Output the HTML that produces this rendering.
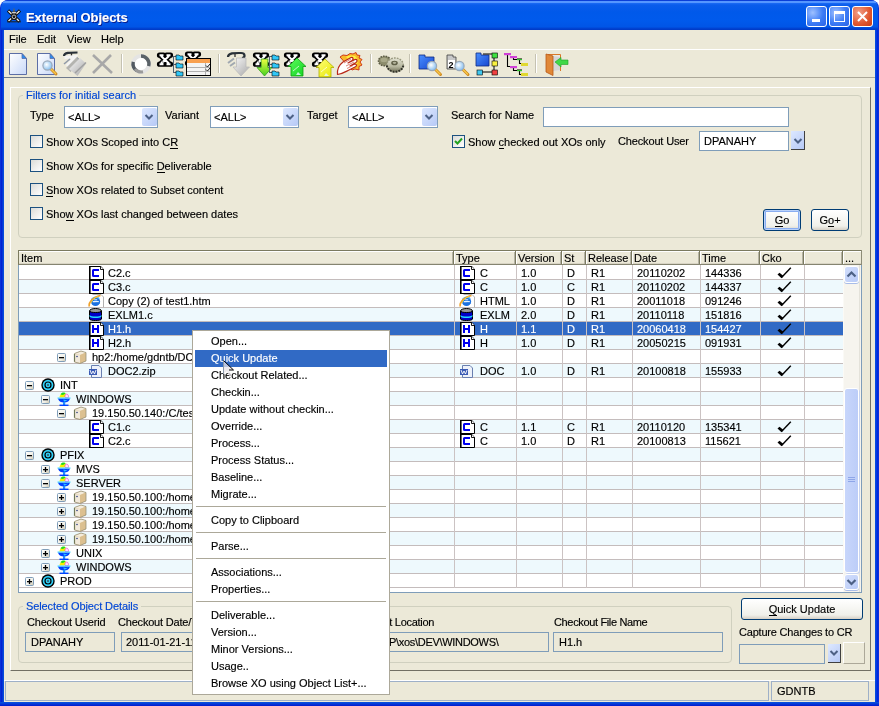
<!DOCTYPE html>
<html><head><meta charset="utf-8"><style>
*{box-sizing:border-box;margin:0;padding:0}
html,body{width:879px;height:706px;overflow:hidden;background:#fff}
body{position:relative;font-family:"Liberation Sans",sans-serif;font-size:11px;color:#000}
.a{position:absolute}
.t{position:absolute;white-space:pre;line-height:13px;-webkit-text-stroke:0.15px currentColor}
#w{position:absolute;left:0;top:0;width:879px;height:706px;will-change:transform}
.ic{position:absolute;overflow:visible}
u{text-decoration:none;border-bottom:1px solid #000;line-height:11px;display:inline-block}
</style></head><body><div id="w">

<svg width="0" height="0" style="position:absolute">
<defs>
<linearGradient id="g-title" x1="0" y1="0" x2="0" y2="1">
 <stop offset="0" stop-color="#0058ee"/><stop offset="0.1" stop-color="#3d95ff"/><stop offset="0.25" stop-color="#0a66ff"/>
 <stop offset="0.5" stop-color="#0055e5"/><stop offset="0.9" stop-color="#0050e0"/><stop offset="1" stop-color="#003dd0"/>
</linearGradient>
<symbol id="i-c" viewBox="0 0 16 14">
 <path d="M1.5 0.5H12.8L15.5 3.2V13.5H1.5Z" fill="#fff" stroke="#000"/>
 <rect x="1" y="0" width="1.6" height="14" fill="#000"/>
 <path d="M12.5 0.5V3.5H15.5" fill="none" stroke="#000" stroke-width="0.9"/>
 <path d="M13 1L15 3H13Z" fill="#fff"/>
 <path d="M11 3H5.5Q4 3 4 4.5V9.5Q4 11 5.5 11H11V9H6V5H11Z" fill="#0000f0"/>
</symbol>
<symbol id="i-h" viewBox="0 0 16 14">
 <path d="M1.5 0.5H12.8L15.5 3.2V13.5H1.5Z" fill="#fff" stroke="#000"/>
 <rect x="1" y="0" width="1.6" height="14" fill="#000"/>
 <path d="M12.5 0.5V3.5H15.5" fill="none" stroke="#000" stroke-width="0.9"/>
 <path d="M13 1L15 3H13Z" fill="#fff"/>
 <path d="M4 3H6V6H9V3H11V11H9V8H6V11H4Z" fill="#0000f0"/>
</symbol>
<symbol id="i-ie" viewBox="0 0 16 14">
 <path d="M4.5 0.5H13L15.5 3V13.5" fill="#fff" stroke="#b0b0b0"/>
 <circle cx="7.5" cy="7.5" r="4.6" fill="#1a70e0"/>
 <path d="M4 5.5A4.5 4.5 0 0 1 11 4.5" stroke="#50b8ff" stroke-width="1.5" fill="none"/>
 <rect x="4.8" y="7" width="6" height="1.3" fill="#e8f4ff"/>
 <path d="M6.2 5.8H9.2" stroke="#e8f4ff" stroke-width="1"/>
 <rect x="7.5" y="8.5" width="4" height="1.5" fill="#1a70e0"/>
 <path d="M1.5 12.5C0 10 4 3 12.5 1.5" fill="none" stroke="#f0a028" stroke-width="1.6"/>
 <path d="M3 9C4 6 7 3.5 10 2.5" fill="none" stroke="#f8e040" stroke-width="0.8"/>
</symbol>
<symbol id="i-db" viewBox="0 0 16 14">
 <ellipse cx="7.5" cy="3" rx="6" ry="2.5" fill="#9a9a9a" stroke="#000"/>
 <path d="M1.5 3V11C1.5 13 13.5 13 13.5 11V3C13.5 5 1.5 5 1.5 3Z" fill="#0000c8" stroke="#000"/>
 <path d="M1.5 7C3 9 12 9 13.5 7V8.5C12 10.5 3 10.5 1.5 8.5Z" fill="#20d8ff"/>
</symbol>
<symbol id="i-doc" viewBox="0 0 16 14">
 <path d="M3.5 1.5H11L13.5 4V13.5H3.5Z" fill="#eef2fa" stroke="#6a7fb0"/>
 <rect x="1" y="5" width="8" height="6" fill="#3b5bb5"/>
 <path d="M2 6L3.5 10L5 7L6.5 10L8 6" fill="none" stroke="#fff" stroke-width="0.9"/>
</symbol>
<symbol id="i-box" viewBox="0 0 16 14">
 <path d="M2 3.5L9 1L14 2.5V11L8 13.5L2 12Z" fill="#e6d4b0"/>
 <path d="M2.5 4L8 5.5V13L2.5 11.5Z" fill="#f2eadc"/>
 <path d="M2.5 3.5L9 1.2L13.8 2.6L8 5Z" fill="#f4ecdc"/>
 <path d="M8 5L13.8 2.6V11L8 13.2Z" fill="#dcc090"/>
 <path d="M2.5 3.8V11.8" stroke="#707858" stroke-width="1.2"/>
 <path d="M2.5 3.5L9 1L14 2.5V11L8 13.5L2.5 12" fill="none" stroke="#8a8468" stroke-width="0.7"/>
 <circle cx="5" cy="6.5" r="0.8" fill="#304080"/>
</symbol>
<symbol id="i-tgt" viewBox="0 0 14 14">
 <circle cx="7" cy="7" r="6.7" fill="#000"/>
 <circle cx="7" cy="7" r="5.3" fill="#30d0f8"/>
 <circle cx="7" cy="7" r="3.6" fill="#000"/>
 <circle cx="7" cy="7" r="2.4" fill="#30d0f8"/>
 <circle cx="7" cy="7" r="1" fill="#305060"/>
</symbol>
<symbol id="i-cup" viewBox="0 0 14 14">
 <path d="M2.5 5.5C2.5 1 9 0 10 3L7 5.5Z" fill="#f8f000"/>
 <path d="M3.5 2.5C4.5 0 8 0 8.5 1.5L6 3Z" fill="#20d820"/>
 <path d="M8 4C8 1 12 1.5 11.5 5.5H8Z" fill="#ffe0ff" stroke="#e040c0" stroke-width="0.6"/>
 <path d="M0.5 5.5H13.5V6.7H0.5Z" fill="#40d8ff"/>
 <path d="M1 6.7H13C12 9.5 10 10.5 7 10.5C4 10.5 2 9.5 1 6.7Z" fill="#0040ff"/>
 <path d="M6.3 7.5C8 8 9 8.5 11 7.2C10 9 8 9.5 7 9.5Z" fill="#30c0ff"/>
 <rect x="6" y="10" width="2.2" height="3" fill="#2090ff"/>
 <rect x="2.5" y="12.6" width="9" height="1.4" fill="#0040ff"/>
</symbol>
<linearGradient id="g-exp" x1="0" y1="0" x2="1" y2="1"><stop offset="0" stop-color="#fff"/><stop offset="0.6" stop-color="#f0f0e8"/><stop offset="1" stop-color="#c8c0a8"/></linearGradient>
<symbol id="i-plus" viewBox="0 0 9 9">
 <rect x="0.5" y="0.5" width="8" height="8" rx="1" fill="url(#g-exp)" stroke="#7f9db9"/>
 <rect x="2" y="4" width="5" height="1.3" fill="#000"/><rect x="3.85" y="2" width="1.3" height="5" fill="#000"/>
</symbol>
<symbol id="i-minus" viewBox="0 0 9 9">
 <rect x="0.5" y="0.5" width="8" height="8" rx="1" fill="url(#g-exp)" stroke="#7f9db9"/>
 <rect x="2" y="4" width="5" height="1.3" fill="#000"/>
</symbol>
<symbol id="i-check" viewBox="0 0 16 14">
 <path d="M1.5 8.5L5.5 12.3L7.5 10L3.5 6.8Z" fill="#000"/>
 <path d="M5.5 11.5L14.8 1.8" fill="none" stroke="#000" stroke-width="1.4"/>
</symbol>
<symbol id="i-ddarrow" viewBox="0 0 16 20">
 <path d="M4.5 8L8 11.5L11.5 8" fill="none" stroke="#4d6185" stroke-width="2"/>
</symbol>
</defs></svg>

<div class="a" style="left:0;top:0;width:879px;height:706px;background:#0831d9;border-radius:8px 8px 0 0"></div>
<div class="a" style="left:1px;top:0;width:877px;height:30px;border-radius:7px 7px 0 0;background:linear-gradient(#0a3fd8 0px,#0a3fd8 1px,#5596ff 1px,#5596ff 3px,#1c6cf6 3px,#0a5ceb 5px,#0059ea 12px,#005aec 20px,#0055e6 27px,#0046d6 28px,#0038c4 30px)"></div>
<div class="a" style="left:1px;top:30px;width:3px;height:672px;background:linear-gradient(90deg,#0019cf,#0855dd)"></div>
<div class="a" style="left:875px;top:30px;width:3px;height:672px;background:linear-gradient(90deg,#0855dd,#001de0)"></div>
<div class="a" style="left:0;top:702px;width:879px;height:4px;background:linear-gradient(#0855dd,#0019cf)"></div>
<svg class="ic" style="left:4px;top:6px" width="20" height="20" viewBox="4 6 20 20">
 <path d="M14 7.5L15 12H13Z" fill="#806830"/>
 <path d="M8 10.5L19.5 21.5M20 10.5L8 21.5" stroke="#101010" stroke-width="3.2"/>
 <path d="M8.5 11L19 21M19.5 11L8.5 21" stroke="#f4f4f0" stroke-width="1.3"/>
 <rect x="11" y="13" width="6" height="7" rx="2" fill="#151515"/>
 <ellipse cx="14" cy="12.7" rx="2.6" ry="1" fill="#f0f0f0" stroke="#222" stroke-width="0.6"/>
 <circle cx="14" cy="16.8" r="1.8" fill="none" stroke="#c8c8c8" stroke-width="0.9"/>
 <path d="M7 21.8H21" stroke="#202020" stroke-width="1"/>
</svg>
<div class="t" style="left:26px;top:10px;letter-spacing:-0.05px;font-size:13px;font-weight:bold;color:#fff;text-shadow:1px 1px 0 #0a1e8c;line-height:15px">External Objects</div>
<div class="a" style="left:806px;top:6px;width:21px;height:21px;border:1px solid #fff;border-radius:3px;background:radial-gradient(circle at 30% 30%,#9ec0ff,#3c7bf5 55%,#2a62e6)"><div class="a" style="left:5px;top:12px;width:8px;height:3px;background:#fff"></div></div>
<div class="a" style="left:829px;top:6px;width:21px;height:21px;border:1px solid #fff;border-radius:3px;background:radial-gradient(circle at 30% 30%,#9ec0ff,#3c7bf5 55%,#2a62e6)"><div class="a" style="left:4px;top:4px;width:11px;height:11px;border:1px solid #fff;border-top:3px solid #fff"></div></div>
<div class="a" style="left:852px;top:6px;width:21px;height:21px;border:1px solid #fff;border-radius:3px;background:radial-gradient(circle at 30% 30%,#f0a08a,#e0562e 60%,#c83c14)"><svg class="ic" style="left:3px;top:3px" width="13" height="13"><path d="M2 2L11 11M11 2L2 11" stroke="#fff" stroke-width="2"/></svg></div>
<div class="a" style="left:4px;top:30px;width:871px;height:672px;background:#ece9d8"></div>
<div class="t" style="left:9px;top:33px">File</div>
<div class="t" style="left:37px;top:33px">Edit</div>
<div class="t" style="left:67px;top:33px">View</div>
<div class="t" style="left:101px;top:33px">Help</div>
<div class="a" style="left:4px;top:49px;width:871px;height:1px;background:#fff"></div>
<div class="a" style="left:4px;top:77px;width:871px;height:1px;background:#aca899"></div>
<div class="a" style="left:4px;top:77px;width:566px;height:1px;background:#6f7a8c"></div>
<svg class="ic" style="left:0;top:48px" width="580" height="30" viewBox="0 48 580 30">
<defs>
<linearGradient id="g-page" x1="0" y1="0" x2="1" y2="1"><stop offset="0" stop-color="#fff"/><stop offset="1" stop-color="#c8d8f8"/></linearGradient>
<radialGradient id="g-lens" cx="0.4" cy="0.4" r="0.6"><stop offset="0" stop-color="#ffffff"/><stop offset="1" stop-color="#88c0f0"/></radialGradient>
<linearGradient id="g-green" x1="0" y1="0" x2="1" y2="1"><stop offset="0" stop-color="#60ff60"/><stop offset="1" stop-color="#10d020"/></linearGradient>
<linearGradient id="g-yellow" x1="0" y1="0" x2="1" y2="1"><stop offset="0" stop-color="#ffff80"/><stop offset="1" stop-color="#e8e800"/></linearGradient>
<linearGradient id="g-gy" x1="0" y1="0" x2="0" y2="1"><stop offset="0" stop-color="#f0ff40"/><stop offset="1" stop-color="#40d020"/></linearGradient>
<linearGradient id="g-greyarrow" x1="0" y1="0" x2="1" y2="1"><stop offset="0" stop-color="#f8f8f8"/><stop offset="1" stop-color="#a8a8a8"/></linearGradient>
<linearGradient id="g-folder" x1="0" y1="0" x2="1" y2="1"><stop offset="0" stop-color="#4a90ff"/><stop offset="1" stop-color="#1848d0"/></linearGradient>
</defs>
<path d="M9.5 53.5H22L26.5 58.5V74.5H9.5Z" fill="url(#g-page)" stroke="#5c6ea6" stroke-width="1"/><path d="M22 53.5V58.5H26.5Z" fill="#2a8cf0" stroke="#5c6ea6" stroke-width="0.8"/>
<path d="M37.5 53.5H50L54.5 58.5V74.5H37.5Z" fill="url(#g-page)" stroke="#5c6ea6" stroke-width="1"/><path d="M50 53.5V58.5H54.5Z" fill="#2a8cf0" stroke="#5c6ea6" stroke-width="0.8"/>
<line x1="50.5" y1="68.5" x2="56.0" y2="74.0" stroke="#d08a20" stroke-width="3" stroke-linecap="round"/><line x1="51.0" y1="69.0" x2="55.5" y2="73.5" stroke="#f8c848" stroke-width="1.4" stroke-linecap="round"/><circle cx="47.5" cy="65.5" r="4.6" fill="url(#g-lens)" stroke="#9aa8b8" stroke-width="1.2"/>
<path d="M64 56C64 52.5 70 52.5 77.5 52.5" stroke="#283038" stroke-width="2.2" fill="none"/>
<path d="M71.5 53V57" stroke="#303030" stroke-width="1.3"/>
<path d="M64.5 57.5L75 56.5L67 66" stroke="#f4f4f4" stroke-width="3" fill="none"/>
<path d="M64 64L70 59" stroke="#909aa8" stroke-width="1.6"/>
<path d="M66 68L77 57L81.5 60.5L70.5 72Z" fill="#b4b4b0"/>
<path d="M77 57.5L81 61L70.5 71.5" stroke="#7080a0" stroke-width="0.8" stroke-dasharray="1 1" fill="none"/>
<path d="M80 58L86 63.5L77.5 76L69 69Z" fill="url(#g-greyarrow)"/>
<path d="M75 73L86 62.5" stroke="#a0a0a0" stroke-width="1.5"/>
<path d="M93 55L112 73M111 55L93 73" stroke="#a8a8a8" stroke-width="2.6"/>
<circle cx="141" cy="64" r="8" fill="#fff" stroke="#e4e4e4" stroke-width="4"/>
<path d="M141 56A8 8 0 0 1 148.7 66.1" fill="none" stroke="#5a6268" stroke-width="3.4"/>
<path d="M137 70.9A8 8 0 0 1 133.3 61.9" fill="none" stroke="#525a62" stroke-width="3.4"/>
<path d="M135 69A8 8 0 0 0 143 71.8" fill="none" stroke="#9a9a9a" stroke-width="3"/>
<circle cx="141" cy="64" r="5.8" fill="#fff"/>
<path d="M161 56L169 63.5M169 56L161 63.5M159.5 55.2H163.5M166.5 55.2H170.5M159.5 64.2H163.5M166.5 64.2H170.5" stroke="#000" stroke-width="5.2" stroke-linecap="round" stroke-linejoin="round" fill="none"/><path d="M161 56L169 63.5M169 56L161 63.5M159.5 55.2H163.5M166.5 55.2H170.5M159.5 64.2H163.5M166.5 64.2H170.5" stroke="#fff" stroke-width="2" stroke-linecap="butt" fill="none"/><path d="M161.5 61L164 63" stroke="#a0a0a0" stroke-width="1.2"/>
<path d="M173.5 56V72.5M173 56.5H176M173 64.5H176M173 72.5H176" stroke="#506070" stroke-width="1" fill="none"/><path d="M176 55h3l1 1h3v4h-7z" fill="#30c8f8" stroke="#000" stroke-width="0.6"/><path d="M176 63h3l1 1h3v4h-7z" fill="#30c8f8" stroke="#000" stroke-width="0.6"/><path d="M176 71h3l1 1h3v4h-7z" fill="#30c8f8" stroke="#000" stroke-width="0.6"/>
<path d="M189 55L197 62.5M197 55L189 62.5M187.5 54.2H191.5M194.5 54.2H198.5M187.5 63.2H191.5M194.5 63.2H198.5" stroke="#000" stroke-width="5.2" stroke-linecap="round" stroke-linejoin="round" fill="none"/><path d="M189 55L197 62.5M197 55L189 62.5M187.5 54.2H191.5M194.5 54.2H198.5M187.5 63.2H191.5M194.5 63.2H198.5" stroke="#fff" stroke-width="2" stroke-linecap="butt" fill="none"/><path d="M189.5 60L192 62" stroke="#a0a0a0" stroke-width="1.2"/>
<rect x="186.5" y="58.5" width="24" height="17" fill="#f4f4f4" stroke="#000"/>
<rect x="187" y="59" width="23" height="4" fill="#f8a050"/>
<path d="M187 67.5H210M187 71.5H210M205.5 63V75" stroke="#b0b0b0" stroke-width="1"/>
<path d="M206 65.5l1.5 1.5l2.5-3M206 69.5l1.5 1.5l2.5-3" stroke="#000" stroke-width="0.9" fill="none"/>
<path d="M228 57C228 52.5 236 53 241 53C245.5 53 245.5 57.5 242 58" stroke="#283038" stroke-width="2.2" fill="none"/>
<path d="M235 54V57" stroke="#303030" stroke-width="1.3"/>
<path d="M228 63L234 58.5M230 66L235 62.5" stroke="#a0a8b0" stroke-width="2" fill="none"/>
<path d="M236.5 58H246V67H249.5L241 76L233 67H236.5Z" fill="url(#g-greyarrow)" stroke="#b8b8b8" stroke-width="0.7"/>
<path d="M257 56L265 63.5M265 56L257 63.5M255.5 55.2H259.5M262.5 55.2H266.5M255.5 64.2H259.5M262.5 64.2H266.5" stroke="#000" stroke-width="5.2" stroke-linecap="round" stroke-linejoin="round" fill="none"/><path d="M257 56L265 63.5M265 56L257 63.5M255.5 55.2H259.5M262.5 55.2H266.5M255.5 64.2H259.5M262.5 64.2H266.5" stroke="#fff" stroke-width="2" stroke-linecap="butt" fill="none"/><path d="M257.5 61L260 63" stroke="#a0a0a0" stroke-width="1.2"/>
<path d="M261.125 59H267.875V67.5H272L264.5 76L257 67.5H261.125Z" fill="url(#g-gy)" stroke="#30a020" stroke-width="0.8"/>
<path d="M269.5 56V72.5M269 56.5H272M269 64.5H272M269 72.5H272" stroke="#506070" stroke-width="1" fill="none"/><path d="M272 55h3l1 1h3v4h-7z" fill="#30c8f8" stroke="#000" stroke-width="0.6"/><path d="M272 63h3l1 1h3v4h-7z" fill="#30c8f8" stroke="#000" stroke-width="0.6"/><path d="M272 71h3l1 1h3v4h-7z" fill="#30c8f8" stroke="#000" stroke-width="0.6"/>
<path d="M288 56L296 63.5M296 56L288 63.5M286.5 55.2H290.5M293.5 55.2H297.5M286.5 64.2H290.5M293.5 64.2H297.5" stroke="#000" stroke-width="5.2" stroke-linecap="round" stroke-linejoin="round" fill="none"/><path d="M288 56L296 63.5M296 56L288 63.5M286.5 55.2H290.5M293.5 55.2H297.5M286.5 64.2H290.5M293.5 64.2H297.5" stroke="#fff" stroke-width="2" stroke-linecap="butt" fill="none"/><path d="M288.5 61L291 63" stroke="#a0a0a0" stroke-width="1.2"/>
<path d="M297 58L306 66.5H303V76H291V66.5H288Z" fill="url(#g-green)" stroke="#10a010" stroke-width="0.8"/><path d="M293 71L299 66" stroke="#fff" stroke-opacity="0.7" stroke-width="1"/><path d="M296 75L298 72L301 75Z" fill="#e8f8ff" fill-opacity="0.8"/>
<path d="M316 56L324 63.5M324 56L316 63.5M314.5 55.2H318.5M321.5 55.2H325.5M314.5 64.2H318.5M321.5 64.2H325.5" stroke="#000" stroke-width="5.2" stroke-linecap="round" stroke-linejoin="round" fill="none"/><path d="M316 56L324 63.5M324 56L316 63.5M314.5 55.2H318.5M321.5 55.2H325.5M314.5 64.2H318.5M321.5 64.2H325.5" stroke="#fff" stroke-width="2" stroke-linecap="butt" fill="none"/><path d="M316.5 61L319 63" stroke="#a0a0a0" stroke-width="1.2"/>
<path d="M325 59L334 67.5H331V77H319V67.5H316Z" fill="url(#g-yellow)" stroke="#b0b000" stroke-width="0.8"/><path d="M321 72L327 67" stroke="#fff" stroke-opacity="0.7" stroke-width="1"/><path d="M324 76L326 73L329 76Z" fill="#e8f8ff" fill-opacity="0.8"/>
<path d="M340 57L343 55L347 55.5L350 53.5L353 54L356 52.5L357 55L360 55.5L359 58L362 59.5L360 62L362 65L359 66.5L359 70L355 69L352 70L349 67Z" fill="#f8b828" stroke="#d03818" stroke-width="1" stroke-linejoin="round"/>
<path d="M346 56.5L351 55.5L355 56L357 58.5L358 62L356 66L351 63Z" fill="#fff040"/>
<path d="M337.5 74.5C337 69 339 65 343 62L351 57.5C353 57 354 59 352 60.5L348 63L355 59.5C357 59 358 61 356 62.5L350 66L355 64C357 64 357 66 355 67L349 70C345 72 342 74 337.5 74.5Z" fill="#fff" stroke="#b82818" stroke-width="1.2" stroke-linejoin="round"/>
<path d="M344 63L351 59M346 66L354 62M347 68.5L353 65.5" stroke="#d05040" stroke-width="0.7"/>
<linearGradient id="g-gear" x1="0" y1="0" x2="0" y2="1"><stop offset="0" stop-color="#e4e4d4"/><stop offset="0.6" stop-color="#b8b8a0"/><stop offset="1" stop-color="#707058"/></linearGradient>
<ellipse cx="384.5" cy="61" rx="6" ry="4.8" fill="#8c8c6c" stroke="#5c5c44" stroke-width="1.5" stroke-dasharray="1.6 1"/>
<ellipse cx="384" cy="60" rx="3.5" ry="2.2" fill="#a8a888"/>
<ellipse cx="395" cy="65" rx="8.3" ry="7" fill="url(#g-gear)" stroke="#9a9a80" stroke-width="1.4" stroke-dasharray="1.8 1.1"/>
<path d="M386.8 65.5A8.3 7 0 0 0 403.3 65.5" fill="none" stroke="#303028" stroke-width="2" stroke-dasharray="1.8 1.1"/>
<ellipse cx="394.5" cy="63" rx="3.3" ry="2.3" fill="#606048"/><ellipse cx="394.5" cy="62.8" rx="1.8" ry="1.1" fill="#b0b098"/>
<path d="M419 55H425V57H434V69H419Z" fill="url(#g-folder)" stroke="#102880" stroke-width="0.8"/>
<line x1="435" y1="69" x2="440.5" y2="74.5" stroke="#d08a20" stroke-width="3" stroke-linecap="round"/><line x1="435.5" y1="69.5" x2="440" y2="74" stroke="#f8c848" stroke-width="1.4" stroke-linecap="round"/><circle cx="432" cy="66" r="4.6" fill="url(#g-lens)" stroke="#9aa8b8" stroke-width="1.2"/>
<path d="M447 55H453V57H456V69H447Z" fill="#c8c8c8" stroke="#404040" stroke-width="0.8"/>
<rect x="448" y="60" width="7" height="8" fill="#fff"/>
<text x="448.5" y="67.5" font-family="Liberation Sans" font-weight="bold" font-size="9" fill="#000">2</text>
<line x1="462.5" y1="69" x2="468.0" y2="74.5" stroke="#d08a20" stroke-width="3" stroke-linecap="round"/><line x1="463.0" y1="69.5" x2="467.5" y2="74" stroke="#f8c848" stroke-width="1.4" stroke-linecap="round"/><circle cx="459.5" cy="66" r="4.6" fill="url(#g-lens)" stroke="#9aa8b8" stroke-width="1.2"/>
<path d="M476 53H481V55H489V66H476Z" fill="url(#g-folder)" stroke="#102880" stroke-width="0.8"/>
<path d="M483 54H492M494 57V71M478 72H492" stroke="#000" stroke-width="1" fill="none"/>
<rect x="492" y="53" width="5.5" height="5" fill="#40e040" stroke="#000" stroke-width="0.6"/>
<rect x="492" y="61" width="5.5" height="5" fill="#f8f040" stroke="#000" stroke-width="0.6"/>
<rect x="492" y="70" width="5.5" height="5" fill="#f04040" stroke="#000" stroke-width="0.6"/>
<rect x="477" y="70" width="5.5" height="5" fill="#40c8f0" stroke="#000" stroke-width="0.6"/>
<path d="M507.5 55V66.5H511M513.5 58V59.5H517M519.5 60V63.5H521M513.5 68V70.5H517M519.5 71V74.5H521" stroke="#000" stroke-width="1.1" fill="none"/>
<rect x="504" y="53" width="7" height="2.2" fill="#d040d8"/>
<rect x="510" y="56" width="7" height="2.2" fill="#d040d8"/>
<rect x="517" y="58" width="5" height="1" fill="#707060"/><rect x="517" y="59" width="5" height="1.2" fill="#30c030"/>
<rect x="521" y="63" width="7" height="3" fill="#e0d830"/>
<rect x="510" y="66" width="7" height="2.2" fill="#d040d8"/>
<rect x="517" y="69" width="5" height="1" fill="#707060"/><rect x="517" y="70" width="5" height="1.2" fill="#30c030"/>
<rect x="521" y="73" width="7" height="3" fill="#e0d830"/>
<path d="M548 54.5H560.5V71" fill="none" stroke="#d87828" stroke-width="1"/>
<path d="M551 56H560V71H553Z" fill="#e8e8e8"/>
<path d="M553 56L560 57V70L553 71Z" fill="#c8c8c8" fill-opacity="0.6"/>
<path d="M546 54L553 56V75.5L546 72Z" fill="#e08838" stroke="#b85818" stroke-width="0.8"/>
<path d="M555 62L561 57.5V60H568V64.5H561V67Z" fill="#40d848" stroke="#20a028" stroke-width="0.6"/>
</svg>
<div class="a" style="left:121px;top:54px;width:1px;height:19px;background:#c5c2b2"></div><div class="a" style="left:122px;top:54px;width:1px;height:19px;background:#fff"></div>
<div class="a" style="left:218px;top:54px;width:1px;height:19px;background:#c5c2b2"></div><div class="a" style="left:219px;top:54px;width:1px;height:19px;background:#fff"></div>
<div class="a" style="left:370px;top:54px;width:1px;height:19px;background:#c5c2b2"></div><div class="a" style="left:371px;top:54px;width:1px;height:19px;background:#fff"></div>
<div class="a" style="left:409px;top:54px;width:1px;height:19px;background:#c5c2b2"></div><div class="a" style="left:410px;top:54px;width:1px;height:19px;background:#fff"></div>
<div class="a" style="left:535px;top:54px;width:1px;height:19px;background:#c5c2b2"></div><div class="a" style="left:536px;top:54px;width:1px;height:19px;background:#fff"></div>
<div class="a" style="left:10px;top:87px;width:861px;height:584px;border-top:1px solid #fff;border-left:1px solid #fff;border-right:1px solid #716f64;border-bottom:1px solid #716f64"></div>
<div class="a" style="left:18px;top:95px;width:844px;height:143px;border:1px solid #d0d0bf;border-radius:4px"></div>
<div class="t" style="left:23px;top:89px;padding:0 3px;background:#ece9d8;color:#0046d5">Filters for initial search</div>
<div class="t" style="left:30px;top:109px">Type</div>
<div class="a" style="left:64px;top:106px;width:94px;height:22px;background:#fff;border:1px solid #7f9db9"></div><div class="t" style="left:68px;top:111px">&lt;ALL&gt;</div><div class="a" style="left:142px;top:108px;width:15px;height:18px;border-radius:2px;background:linear-gradient(135deg,#dde8ff,#b6c9f6)"></div><svg class="ic" style="left:141px;top:107px" width="16" height="20"><use href="#i-ddarrow"/></svg>
<div class="t" style="left:165px;top:109px">Variant</div>
<div class="a" style="left:210px;top:106px;width:89px;height:22px;background:#fff;border:1px solid #7f9db9"></div><div class="t" style="left:214px;top:111px">&lt;ALL&gt;</div><div class="a" style="left:283px;top:108px;width:15px;height:18px;border-radius:2px;background:linear-gradient(135deg,#dde8ff,#b6c9f6)"></div><svg class="ic" style="left:282px;top:107px" width="16" height="20"><use href="#i-ddarrow"/></svg>
<div class="t" style="left:307px;top:109px">Target</div>
<div class="a" style="left:348px;top:106px;width:90px;height:22px;background:#fff;border:1px solid #7f9db9"></div><div class="t" style="left:352px;top:111px">&lt;ALL&gt;</div><div class="a" style="left:422px;top:108px;width:15px;height:18px;border-radius:2px;background:linear-gradient(135deg,#dde8ff,#b6c9f6)"></div><svg class="ic" style="left:421px;top:107px" width="16" height="20"><use href="#i-ddarrow"/></svg>
<div class="t" style="left:451px;top:109px">Search for Name</div>
<div class="a" style="left:543px;top:107px;width:246px;height:20px;background:#fff;border:1px solid #7f9db9"></div>
<div class="a" style="left:30px;top:135px;width:13px;height:13px;border:1px solid #1c5180;background:linear-gradient(135deg,#dcdcd7,#fff)"></div>
<div class="t" style="left:46px;top:136px">Show XOs Scoped into C<u>R</u></div>
<div class="a" style="left:30px;top:159px;width:13px;height:13px;border:1px solid #1c5180;background:linear-gradient(135deg,#dcdcd7,#fff)"></div>
<div class="t" style="left:46px;top:160px">Show XOs for specific <u>D</u>eliverable</div>
<div class="a" style="left:30px;top:183px;width:13px;height:13px;border:1px solid #1c5180;background:linear-gradient(135deg,#dcdcd7,#fff)"></div>
<div class="t" style="left:46px;top:184px"><u>S</u>how XOs related to Subset content</div>
<div class="a" style="left:30px;top:207px;width:13px;height:13px;border:1px solid #1c5180;background:linear-gradient(135deg,#dcdcd7,#fff)"></div>
<div class="t" style="left:46px;top:208px">Sho<u>w</u> XOs last changed between dates</div>
<div class="a" style="left:452px;top:135px;width:13px;height:13px;border:1px solid #1c5180;background:linear-gradient(135deg,#dcdcd7,#fff)"></div><svg class="ic" style="left:454px;top:137px" width="9" height="9"><path d="M1 4L3.5 6.5L8 1.5" fill="none" stroke="#21a121" stroke-width="2"/></svg>
<div class="t" style="left:468px;top:136px">Show <u>c</u>hecked out XOs only</div>
<div class="t" style="left:618px;top:135px;letter-spacing:-0.15px">Checkout User</div>
<div class="a" style="left:699px;top:131px;width:90px;height:20px;background:#fff;border:1px solid #7f9db9"></div>
<div class="t" style="left:704px;top:135px">DPANAHY</div>
<div class="a" style="left:791px;top:131px;width:14px;height:19px;border-right:1px solid #404040;border-bottom:1px solid #404040;background:linear-gradient(135deg,#dde8ff,#b6c9f6)"></div>
<svg class="ic" style="left:790px;top:131px" width="16" height="20"><use href="#i-ddarrow"/></svg>
<div class="a" style="left:763px;top:209px;width:38px;height:22px;border:1px solid #003c74;border-radius:3px;background:linear-gradient(#fff,#f0f0ea 80%,#d6d0c5);box-shadow:inset 0 0 0 1px #b9d1fa,inset 0 0 0 2px #89adf0"></div><div class="t" style="left:763px;top:214px;width:38px;text-align:center"><u>G</u>o</div>
<div class="a" style="left:811px;top:209px;width:38px;height:22px;border:1px solid #003c74;border-radius:3px;background:linear-gradient(#fff,#f0f0ea 80%,#d6d0c5)"></div><div class="t" style="left:811px;top:214px;width:38px;text-align:center">G<u>o</u>+</div>
<div class="a" style="left:18px;top:250px;width:844px;height:343px;border:1px solid #7f9db9;background:#fff"></div>
<div class="a" style="left:18px;top:250px;width:844px;height:15px;background:#ece9d8;border-top:1px solid #7b7a5f;border-left:1px solid #7b7a5f;border-bottom:1px solid #858470"></div>
<div class="a" style="left:19px;top:251px;width:842px;height:1px;background:#fff"></div>
<div class="a" style="left:19px;top:263px;width:842px;height:1px;background:#d8d4c4"></div>
<div class="a" style="left:861px;top:250px;width:1px;height:15px;background:#8d8c78"></div>
<div class="t" style="left:21px;top:252px">Item</div>
<div class="a" style="left:452px;top:252px;width:1px;height:12px;background:#b4b2a4"></div><div class="a" style="left:453px;top:251px;width:1px;height:13px;background:#7b7a5f"></div><div class="a" style="left:454px;top:251px;width:1px;height:13px;background:#fff"></div>
<div class="t" style="left:456px;top:252px">Type</div>
<div class="a" style="left:514px;top:252px;width:1px;height:12px;background:#b4b2a4"></div><div class="a" style="left:515px;top:251px;width:1px;height:13px;background:#7b7a5f"></div><div class="a" style="left:516px;top:251px;width:1px;height:13px;background:#fff"></div>
<div class="t" style="left:518px;top:252px">Version</div>
<div class="a" style="left:560px;top:252px;width:1px;height:12px;background:#b4b2a4"></div><div class="a" style="left:561px;top:251px;width:1px;height:13px;background:#7b7a5f"></div><div class="a" style="left:562px;top:251px;width:1px;height:13px;background:#fff"></div>
<div class="t" style="left:564px;top:252px">St</div>
<div class="a" style="left:584px;top:252px;width:1px;height:12px;background:#b4b2a4"></div><div class="a" style="left:585px;top:251px;width:1px;height:13px;background:#7b7a5f"></div><div class="a" style="left:586px;top:251px;width:1px;height:13px;background:#fff"></div>
<div class="t" style="left:588px;top:252px">Release</div>
<div class="a" style="left:630px;top:252px;width:1px;height:12px;background:#b4b2a4"></div><div class="a" style="left:631px;top:251px;width:1px;height:13px;background:#7b7a5f"></div><div class="a" style="left:632px;top:251px;width:1px;height:13px;background:#fff"></div>
<div class="t" style="left:634px;top:252px">Date</div>
<div class="a" style="left:698px;top:252px;width:1px;height:12px;background:#b4b2a4"></div><div class="a" style="left:699px;top:251px;width:1px;height:13px;background:#7b7a5f"></div><div class="a" style="left:700px;top:251px;width:1px;height:13px;background:#fff"></div>
<div class="t" style="left:702px;top:252px">Time</div>
<div class="a" style="left:758px;top:252px;width:1px;height:12px;background:#b4b2a4"></div><div class="a" style="left:759px;top:251px;width:1px;height:13px;background:#7b7a5f"></div><div class="a" style="left:760px;top:251px;width:1px;height:13px;background:#fff"></div>
<div class="t" style="left:762px;top:252px">Cko</div>
<div class="a" style="left:802px;top:252px;width:1px;height:12px;background:#b4b2a4"></div><div class="a" style="left:803px;top:251px;width:1px;height:13px;background:#7b7a5f"></div><div class="a" style="left:804px;top:251px;width:1px;height:13px;background:#fff"></div>
<div class="a" style="left:841px;top:252px;width:1px;height:12px;background:#b4b2a4"></div><div class="a" style="left:842px;top:251px;width:1px;height:13px;background:#7b7a5f"></div><div class="a" style="left:843px;top:251px;width:1px;height:13px;background:#fff"></div>
<div class="t" style="left:845px;top:252px">...</div>
<div class="a" style="left:19px;top:266px;width:824px;height:14px;background:#fff;border-bottom:1px solid #c4bcbc"></div>
<div class="a" style="left:19px;top:280px;width:824px;height:14px;background:#eef9fd;border-bottom:1px solid #c4bcbc"></div>
<div class="a" style="left:19px;top:294px;width:824px;height:14px;background:#fff;border-bottom:1px solid #c4bcbc"></div>
<div class="a" style="left:19px;top:308px;width:824px;height:14px;background:#eef9fd;border-bottom:1px solid #c4bcbc"></div>
<div class="a" style="left:19px;top:322px;width:824px;height:14px;background:#316ac5;border-bottom:1px solid #c4bcbc"></div>
<div class="a" style="left:19px;top:336px;width:824px;height:14px;background:#eef9fd;border-bottom:1px solid #c4bcbc"></div>
<div class="a" style="left:19px;top:350px;width:824px;height:14px;background:#fff;border-bottom:1px solid #c4bcbc"></div>
<div class="a" style="left:19px;top:364px;width:824px;height:14px;background:#eef9fd;border-bottom:1px solid #c4bcbc"></div>
<div class="a" style="left:19px;top:378px;width:824px;height:14px;background:#fff;border-bottom:1px solid #c4bcbc"></div>
<div class="a" style="left:19px;top:392px;width:824px;height:14px;background:#eef9fd;border-bottom:1px solid #c4bcbc"></div>
<div class="a" style="left:19px;top:406px;width:824px;height:14px;background:#fff;border-bottom:1px solid #c4bcbc"></div>
<div class="a" style="left:19px;top:420px;width:824px;height:14px;background:#eef9fd;border-bottom:1px solid #c4bcbc"></div>
<div class="a" style="left:19px;top:434px;width:824px;height:14px;background:#fff;border-bottom:1px solid #c4bcbc"></div>
<div class="a" style="left:19px;top:448px;width:824px;height:14px;background:#eef9fd;border-bottom:1px solid #c4bcbc"></div>
<div class="a" style="left:19px;top:462px;width:824px;height:14px;background:#fff;border-bottom:1px solid #c4bcbc"></div>
<div class="a" style="left:19px;top:476px;width:824px;height:14px;background:#eef9fd;border-bottom:1px solid #c4bcbc"></div>
<div class="a" style="left:19px;top:490px;width:824px;height:14px;background:#fff;border-bottom:1px solid #c4bcbc"></div>
<div class="a" style="left:19px;top:504px;width:824px;height:14px;background:#eef9fd;border-bottom:1px solid #c4bcbc"></div>
<div class="a" style="left:19px;top:518px;width:824px;height:14px;background:#fff;border-bottom:1px solid #c4bcbc"></div>
<div class="a" style="left:19px;top:532px;width:824px;height:14px;background:#eef9fd;border-bottom:1px solid #c4bcbc"></div>
<div class="a" style="left:19px;top:546px;width:824px;height:14px;background:#fff;border-bottom:1px solid #c4bcbc"></div>
<div class="a" style="left:19px;top:560px;width:824px;height:14px;background:#eef9fd;border-bottom:1px solid #c4bcbc"></div>
<div class="a" style="left:19px;top:574px;width:824px;height:14px;background:#fff;border-bottom:1px solid #c4bcbc"></div>
<div class="a" style="left:454px;top:265px;width:1px;height:323px;background:#cbc3c3"></div>
<div class="a" style="left:516px;top:265px;width:1px;height:323px;background:#cbc3c3"></div>
<div class="a" style="left:562px;top:265px;width:1px;height:323px;background:#cbc3c3"></div>
<div class="a" style="left:586px;top:265px;width:1px;height:323px;background:#cbc3c3"></div>
<div class="a" style="left:632px;top:265px;width:1px;height:323px;background:#cbc3c3"></div>
<div class="a" style="left:700px;top:265px;width:1px;height:323px;background:#cbc3c3"></div>
<div class="a" style="left:760px;top:265px;width:1px;height:323px;background:#cbc3c3"></div>
<div class="a" style="left:804px;top:265px;width:1px;height:323px;background:#cbc3c3"></div>
<svg class="ic" style="left:88px;top:266px" width="16" height="14"><use href="#i-c"/></svg>
<div class="t" style="left:108px;top:267px;color:#000">C2.c</div>
<svg class="ic" style="left:459px;top:266px" width="16" height="14"><use href="#i-c"/></svg>
<div class="t" style="left:480px;top:267px;color:#000">C</div>
<div class="t" style="left:521px;top:267px;color:#000">1.0</div>
<div class="t" style="left:567px;top:267px;color:#000">D</div>
<div class="t" style="left:591px;top:267px;color:#000">R1</div>
<div class="t" style="left:637px;top:267px;color:#000">20110202</div>
<div class="t" style="left:705px;top:267px;color:#000">144336</div>
<svg class="ic" style="left:776px;top:266px" width="16" height="14"><use href="#i-check"/></svg>
<svg class="ic" style="left:88px;top:280px" width="16" height="14"><use href="#i-c"/></svg>
<div class="t" style="left:108px;top:281px;color:#000">C3.c</div>
<svg class="ic" style="left:459px;top:280px" width="16" height="14"><use href="#i-c"/></svg>
<div class="t" style="left:480px;top:281px;color:#000">C</div>
<div class="t" style="left:521px;top:281px;color:#000">1.0</div>
<div class="t" style="left:567px;top:281px;color:#000">C</div>
<div class="t" style="left:591px;top:281px;color:#000">R1</div>
<div class="t" style="left:637px;top:281px;color:#000">20110202</div>
<div class="t" style="left:705px;top:281px;color:#000">144337</div>
<svg class="ic" style="left:776px;top:280px" width="16" height="14"><use href="#i-check"/></svg>
<svg class="ic" style="left:88px;top:294px" width="16" height="14"><use href="#i-ie"/></svg>
<div class="t" style="left:108px;top:295px;color:#000">Copy (2) of test1.htm</div>
<svg class="ic" style="left:459px;top:294px" width="16" height="14"><use href="#i-ie"/></svg>
<div class="t" style="left:480px;top:295px;color:#000">HTML</div>
<div class="t" style="left:521px;top:295px;color:#000">1.0</div>
<div class="t" style="left:567px;top:295px;color:#000">D</div>
<div class="t" style="left:591px;top:295px;color:#000">R1</div>
<div class="t" style="left:637px;top:295px;color:#000">20011018</div>
<div class="t" style="left:705px;top:295px;color:#000">091246</div>
<svg class="ic" style="left:776px;top:294px" width="16" height="14"><use href="#i-check"/></svg>
<svg class="ic" style="left:88px;top:308px" width="16" height="14"><use href="#i-db"/></svg>
<div class="t" style="left:108px;top:309px;color:#000">EXLM1.c</div>
<svg class="ic" style="left:459px;top:308px" width="16" height="14"><use href="#i-db"/></svg>
<div class="t" style="left:480px;top:309px;color:#000">EXLM</div>
<div class="t" style="left:521px;top:309px;color:#000">2.0</div>
<div class="t" style="left:567px;top:309px;color:#000">D</div>
<div class="t" style="left:591px;top:309px;color:#000">R1</div>
<div class="t" style="left:637px;top:309px;color:#000">20110118</div>
<div class="t" style="left:705px;top:309px;color:#000">151816</div>
<svg class="ic" style="left:776px;top:308px" width="16" height="14"><use href="#i-check"/></svg>
<svg class="ic" style="left:88px;top:322px" width="16" height="14"><use href="#i-h"/></svg>
<div class="t" style="left:108px;top:323px;color:#fff">H1.h</div>
<svg class="ic" style="left:459px;top:322px" width="16" height="14"><use href="#i-h"/></svg>
<div class="t" style="left:480px;top:323px;color:#fff">H</div>
<div class="t" style="left:521px;top:323px;color:#fff">1.1</div>
<div class="t" style="left:567px;top:323px;color:#fff">D</div>
<div class="t" style="left:591px;top:323px;color:#fff">R1</div>
<div class="t" style="left:637px;top:323px;color:#fff">20060418</div>
<div class="t" style="left:705px;top:323px;color:#fff">154427</div>
<svg class="ic" style="left:776px;top:322px" width="16" height="14"><use href="#i-check"/></svg>
<svg class="ic" style="left:88px;top:336px" width="16" height="14"><use href="#i-h"/></svg>
<div class="t" style="left:108px;top:337px;color:#000">H2.h</div>
<svg class="ic" style="left:459px;top:336px" width="16" height="14"><use href="#i-h"/></svg>
<div class="t" style="left:480px;top:337px;color:#000">H</div>
<div class="t" style="left:521px;top:337px;color:#000">1.0</div>
<div class="t" style="left:567px;top:337px;color:#000">D</div>
<div class="t" style="left:591px;top:337px;color:#000">R1</div>
<div class="t" style="left:637px;top:337px;color:#000">20050215</div>
<div class="t" style="left:705px;top:337px;color:#000">091931</div>
<svg class="ic" style="left:776px;top:336px" width="16" height="14"><use href="#i-check"/></svg>
<svg class="ic" style="left:57px;top:353px" width="9" height="9"><use href="#i-minus"/></svg>
<svg class="ic" style="left:72px;top:350px" width="16" height="14"><use href="#i-box"/></svg>
<div class="t" style="left:92px;top:351px;color:#000">hp2:/home/gdntb/DOC2</div>
<svg class="ic" style="left:88px;top:364px" width="16" height="14"><use href="#i-doc"/></svg>
<div class="t" style="left:108px;top:365px;color:#000">DOC2.zip</div>
<svg class="ic" style="left:459px;top:364px" width="16" height="14"><use href="#i-doc"/></svg>
<div class="t" style="left:480px;top:365px;color:#000">DOC</div>
<div class="t" style="left:521px;top:365px;color:#000">1.0</div>
<div class="t" style="left:567px;top:365px;color:#000">D</div>
<div class="t" style="left:591px;top:365px;color:#000">R1</div>
<div class="t" style="left:637px;top:365px;color:#000">20100818</div>
<div class="t" style="left:705px;top:365px;color:#000">155933</div>
<svg class="ic" style="left:776px;top:364px" width="16" height="14"><use href="#i-check"/></svg>
<svg class="ic" style="left:25px;top:381px" width="9" height="9"><use href="#i-minus"/></svg>
<svg class="ic" style="left:41px;top:378px" width="14" height="14"><use href="#i-tgt"/></svg>
<div class="t" style="left:60px;top:379px;color:#000">INT</div>
<svg class="ic" style="left:41px;top:395px" width="9" height="9"><use href="#i-minus"/></svg>
<svg class="ic" style="left:57px;top:392px" width="14" height="14"><use href="#i-cup"/></svg>
<div class="t" style="left:76px;top:393px;color:#000">WINDOWS</div>
<svg class="ic" style="left:57px;top:409px" width="9" height="9"><use href="#i-minus"/></svg>
<svg class="ic" style="left:72px;top:406px" width="16" height="14"><use href="#i-box"/></svg>
<div class="t" style="left:92px;top:407px;color:#000">19.150.50.140:/C/test</div>
<svg class="ic" style="left:88px;top:420px" width="16" height="14"><use href="#i-c"/></svg>
<div class="t" style="left:108px;top:421px;color:#000">C1.c</div>
<svg class="ic" style="left:459px;top:420px" width="16" height="14"><use href="#i-c"/></svg>
<div class="t" style="left:480px;top:421px;color:#000">C</div>
<div class="t" style="left:521px;top:421px;color:#000">1.1</div>
<div class="t" style="left:567px;top:421px;color:#000">C</div>
<div class="t" style="left:591px;top:421px;color:#000">R1</div>
<div class="t" style="left:637px;top:421px;color:#000">20110120</div>
<div class="t" style="left:705px;top:421px;color:#000">135341</div>
<svg class="ic" style="left:776px;top:420px" width="16" height="14"><use href="#i-check"/></svg>
<svg class="ic" style="left:88px;top:434px" width="16" height="14"><use href="#i-c"/></svg>
<div class="t" style="left:108px;top:435px;color:#000">C2.c</div>
<svg class="ic" style="left:459px;top:434px" width="16" height="14"><use href="#i-c"/></svg>
<div class="t" style="left:480px;top:435px;color:#000">C</div>
<div class="t" style="left:521px;top:435px;color:#000">1.0</div>
<div class="t" style="left:567px;top:435px;color:#000">D</div>
<div class="t" style="left:591px;top:435px;color:#000">R1</div>
<div class="t" style="left:637px;top:435px;color:#000">20100813</div>
<div class="t" style="left:705px;top:435px;color:#000">115621</div>
<svg class="ic" style="left:776px;top:434px" width="16" height="14"><use href="#i-check"/></svg>
<svg class="ic" style="left:25px;top:451px" width="9" height="9"><use href="#i-minus"/></svg>
<svg class="ic" style="left:41px;top:448px" width="14" height="14"><use href="#i-tgt"/></svg>
<div class="t" style="left:60px;top:449px;color:#000">PFIX</div>
<svg class="ic" style="left:41px;top:465px" width="9" height="9"><use href="#i-plus"/></svg>
<svg class="ic" style="left:57px;top:462px" width="14" height="14"><use href="#i-cup"/></svg>
<div class="t" style="left:76px;top:463px;color:#000">MVS</div>
<svg class="ic" style="left:41px;top:479px" width="9" height="9"><use href="#i-minus"/></svg>
<svg class="ic" style="left:57px;top:476px" width="14" height="14"><use href="#i-cup"/></svg>
<div class="t" style="left:76px;top:477px;color:#000">SERVER</div>
<svg class="ic" style="left:57px;top:493px" width="9" height="9"><use href="#i-plus"/></svg>
<svg class="ic" style="left:72px;top:490px" width="16" height="14"><use href="#i-box"/></svg>
<div class="t" style="left:92px;top:491px;color:#000">19.150.50.100:/home/gdntb</div>
<svg class="ic" style="left:57px;top:507px" width="9" height="9"><use href="#i-plus"/></svg>
<svg class="ic" style="left:72px;top:504px" width="16" height="14"><use href="#i-box"/></svg>
<div class="t" style="left:92px;top:505px;color:#000">19.150.50.100:/home/gdntb</div>
<svg class="ic" style="left:57px;top:521px" width="9" height="9"><use href="#i-plus"/></svg>
<svg class="ic" style="left:72px;top:518px" width="16" height="14"><use href="#i-box"/></svg>
<div class="t" style="left:92px;top:519px;color:#000">19.150.50.100:/home/gdntb</div>
<svg class="ic" style="left:57px;top:535px" width="9" height="9"><use href="#i-plus"/></svg>
<svg class="ic" style="left:72px;top:532px" width="16" height="14"><use href="#i-box"/></svg>
<div class="t" style="left:92px;top:533px;color:#000">19.150.50.100:/home/gdntb</div>
<svg class="ic" style="left:41px;top:549px" width="9" height="9"><use href="#i-plus"/></svg>
<svg class="ic" style="left:57px;top:546px" width="14" height="14"><use href="#i-cup"/></svg>
<div class="t" style="left:76px;top:547px;color:#000">UNIX</div>
<svg class="ic" style="left:41px;top:563px" width="9" height="9"><use href="#i-plus"/></svg>
<svg class="ic" style="left:57px;top:560px" width="14" height="14"><use href="#i-cup"/></svg>
<div class="t" style="left:76px;top:561px;color:#000">WINDOWS</div>
<svg class="ic" style="left:25px;top:577px" width="9" height="9"><use href="#i-plus"/></svg>
<svg class="ic" style="left:41px;top:574px" width="14" height="14"><use href="#i-tgt"/></svg>
<div class="t" style="left:60px;top:575px;color:#000">PROD</div>
<div class="a" style="left:843px;top:265px;width:18px;height:327px;background:#f6f4ee;border-left:1px solid #fbfaf6"></div>
<div class="a" style="left:859px;top:265px;width:1px;height:327px;background:#e4e2da"></div>
<div class="a" style="left:844px;top:266px;width:15px;height:17px;border-radius:3px;border:1px solid #fff;box-shadow:0 1px 0 #a8bce8;background:linear-gradient(135deg,#d2defc,#b9cbf7)"></div>
<svg class="ic" style="left:844px;top:267px" width="15" height="15"><path d="M3.5 9.5L7.5 5.5L11.5 9.5" fill="none" stroke="#4d6185" stroke-width="2.2"/></svg>
<div class="a" style="left:844px;top:388px;width:15px;height:185px;border-radius:3px;border:1px solid #fff;box-shadow:1px 1px 0 #c8d4f0;background:linear-gradient(90deg,#c8d6fb,#bccdf8)"></div>
<svg class="ic" style="left:847px;top:476px" width="9" height="8"><path d="M1 1.5H8M1 3.5H8M1 5.5H8" stroke="#8ea6e8" stroke-width="1"/></svg>
<div class="a" style="left:844px;top:574px;width:15px;height:16px;border-radius:3px;border:1px solid #fff;box-shadow:0 1px 0 #a8bce8;background:linear-gradient(135deg,#d2defc,#b9cbf7)"></div>
<svg class="ic" style="left:844px;top:575px" width="15" height="15"><path d="M3.5 5L7.5 9L11.5 5" fill="none" stroke="#4d6185" stroke-width="2.2"/></svg>
<div class="a" style="left:18px;top:606px;width:714px;height:57px;border:1px solid #d0d0bf;border-radius:4px"></div>
<div class="t" style="left:23px;top:600px;padding:0 3px;background:#ece9d8;color:#0046d5;letter-spacing:-0.1px">Selected Object Details</div>
<div class="t" style="left:27px;top:616px;letter-spacing:-0.2px">Checkout Userid</div>
<div class="a" style="left:25px;top:632px;width:90px;height:20px;border:1px solid #7f9db9"></div>
<div class="t" style="left:31px;top:636px">DPANAHY</div>
<div class="t" style="left:118px;top:616px;letter-spacing:-0.2px">Checkout Date/Time</div>
<div class="a" style="left:121px;top:632px;width:100px;height:20px;border:1px solid #7f9db9"></div>
<div class="t" style="left:126px;top:636px">2011-01-21-11.22</div>
<div class="t" style="left:348px;top:616px;letter-spacing:-0.3px">Checkout Location</div>
<div class="a" style="left:300px;top:632px;width:249px;height:20px;border:1px solid #7f9db9"></div>
<div class="t" style="left:389px;top:636px;letter-spacing:-0.3px">P\xos\DEV\WINDOWS\</div>
<div class="t" style="left:554px;top:616px;letter-spacing:-0.35px">Checkout File Name</div>
<div class="a" style="left:553px;top:632px;width:170px;height:20px;border:1px solid #7f9db9"></div>
<div class="t" style="left:559px;top:636px">H1.h</div>
<div class="a" style="left:741px;top:598px;width:122px;height:22px;border:1px solid #003c74;border-radius:3px;background:linear-gradient(#fff,#f0f0ea 80%,#d6d0c5)"></div><div class="t" style="left:741px;top:603px;width:122px;text-align:center"><u>Q</u>uick Update</div>
<div class="t" style="left:739px;top:626px;letter-spacing:-0.2px">Capture Changes to CR</div>
<div class="a" style="left:739px;top:644px;width:86px;height:20px;border:1px solid #7f9db9"></div>
<div class="a" style="left:828px;top:644px;width:13px;height:19px;border-right:1px solid #404040;border-bottom:1px solid #404040;background:linear-gradient(135deg,#dde8ff,#b6c9f6)"></div>
<svg class="ic" style="left:826px;top:643px" width="16" height="20"><use href="#i-ddarrow"/></svg>
<div class="a" style="left:843px;top:642px;width:22px;height:22px;border-top:1px solid #fff;border-left:1px solid #fff;border-right:1px solid #aca899;border-bottom:1px solid #aca899"></div>
<div class="a" style="left:4px;top:680px;width:871px;height:1px;background:#fff"></div>
<div class="a" style="left:5px;top:681px;width:764px;height:20px;border:1px solid #9eb0c8"></div>
<div class="a" style="left:771px;top:681px;width:98px;height:20px;border:1px solid #9eb0c8"></div>
<div class="t" style="left:777px;top:685px">GDNTB</div>
<div class="a" style="left:192px;top:330px;width:198px;height:365px;background:#fff;border:1px solid #aca899"></div>
<div class="t" style="left:211px;top:335px;color:#000">Open...</div>
<div class="a" style="left:195px;top:350px;width:192px;height:17px;background:#316ac5"></div>
<div class="t" style="left:211px;top:352px;color:#fff">Quick Update</div>
<div class="t" style="left:211px;top:369px;color:#000">Checkout Related...</div>
<div class="t" style="left:211px;top:386px;color:#000">Checkin...</div>
<div class="t" style="left:211px;top:403px;color:#000">Update without checkin...</div>
<div class="t" style="left:211px;top:420px;color:#000">Override...</div>
<div class="t" style="left:211px;top:437px;color:#000">Process...</div>
<div class="t" style="left:211px;top:454px;color:#000">Process Status...</div>
<div class="t" style="left:211px;top:471px;color:#000">Baseline...</div>
<div class="t" style="left:211px;top:488px;color:#000">Migrate...</div>
<div class="a" style="left:196px;top:506px;width:190px;height:1px;background:#aca899"></div>
<div class="t" style="left:211px;top:514px;color:#000">Copy to Clipboard</div>
<div class="a" style="left:196px;top:532px;width:190px;height:1px;background:#aca899"></div>
<div class="t" style="left:211px;top:540px;color:#000">Parse...</div>
<div class="a" style="left:196px;top:558px;width:190px;height:1px;background:#aca899"></div>
<div class="t" style="left:211px;top:566px;color:#000">Associations...</div>
<div class="t" style="left:211px;top:583px;color:#000">Properties...</div>
<div class="a" style="left:196px;top:601px;width:190px;height:1px;background:#aca899"></div>
<div class="t" style="left:211px;top:609px;color:#000">Deliverable...</div>
<div class="t" style="left:211px;top:626px;color:#000">Version...</div>
<div class="t" style="left:211px;top:643px;color:#000">Minor Versions...</div>
<div class="t" style="left:211px;top:660px;color:#000">Usage..</div>
<div class="t" style="left:211px;top:677px;color:#000">Browse XO using Object List+...</div>
<svg class="ic" style="left:220px;top:358px" width="16" height="22" viewBox="220 358 16 22"><path d="M223.5 360.5L233.5 370H229L231.5 376L229.5 377L227 371L223.5 374Z" fill="#e8e4e8" fill-opacity="0.75"/><path d="M223.5 360.5L233.5 370H229" fill="none" stroke="#000" stroke-width="1"/><path d="M223.5 361V374" stroke="#8a98a8" stroke-width="1"/></svg>
</div></body></html>
